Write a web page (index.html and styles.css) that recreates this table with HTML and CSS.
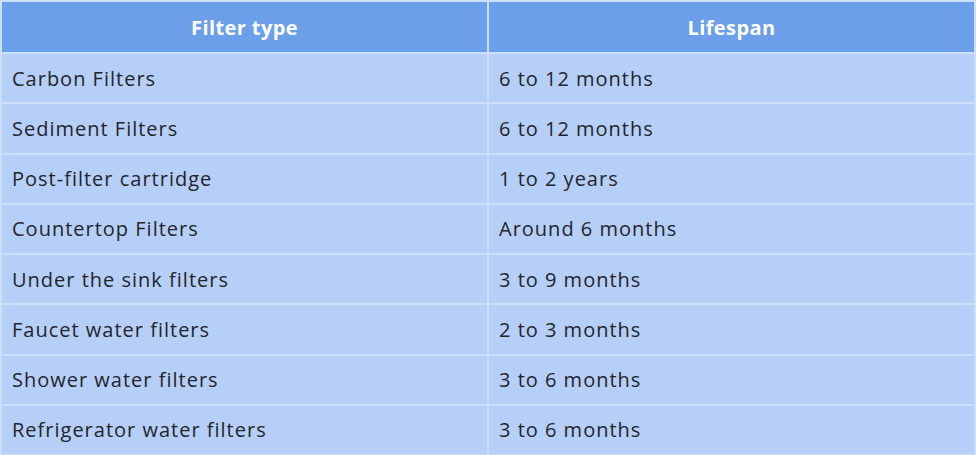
FILE: index.html
```html
<!DOCTYPE html>
<html lang="en">
<head>
  <meta charset="UTF-8">
  <meta name="viewport" content="width=device-width, initial-scale=1.0">
  <title>Filter lifespan</title>
  <link rel="stylesheet" href="styles.css">
</head>
<body>
  <table class="lifespan">
    <thead>
      <tr>
        <th>Filter type</th>
        <th>Lifespan</th>
      </tr>
    </thead>
    <tbody>
      <tr><td>Carbon Filters</td><td>6 to 12 months</td></tr>
      <tr><td>Sediment Filters</td><td>6 to 12 months</td></tr>
      <tr><td>Post-filter cartridge</td><td>1 to 2 years</td></tr>
      <tr><td>Countertop Filters</td><td>Around 6 months</td></tr>
      <tr><td>Under the sink filters</td><td>3 to 9 months</td></tr>
      <tr><td>Faucet water filters</td><td>2 to 3 months</td></tr>
      <tr><td>Shower water filters</td><td>3 to 6 months</td></tr>
      <tr><td>Refrigerator water filters</td><td>3 to 6 months</td></tr>
    </tbody>
  </table>
</body>
</html>
```

FILE: styles.css
```css
body {
  margin: 0;
  background: #fff;
  font-family: "Open Sans", Arial, sans-serif;
}
.lifespan {
  width: 976px;
  border-collapse: collapse;
  table-layout: fixed;
}
.lifespan th,
.lifespan td {
  border: 2px solid #cbdefa;
  padding: 0 10px;
  box-sizing: border-box;
  font-size: 20px;
}
.lifespan th {
  background: #6c9fea;
  color: #fff;
  font-weight: 700;
  letter-spacing: 0.4px;
  text-align: center;
  height: 52px;
}
.lifespan td {
  background: #b5cff9;
  color: #23252b;
  letter-spacing: 1px;
  text-align: left;
  height: 50.25px;
}
```
